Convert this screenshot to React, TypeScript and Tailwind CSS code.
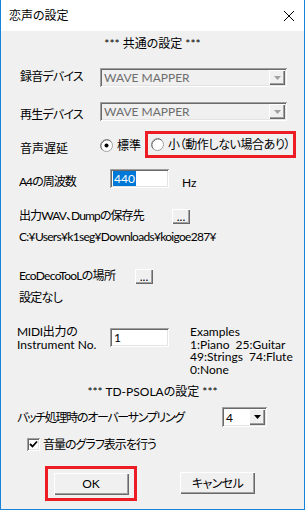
import React from "react";

const font = "font-['Lato','Noto_Sans_CJK_JP',sans-serif] [font-feature-settings:'palt']";

const sunken =
  "shadow-[inset_1px_1px_0_#a0a0a0,inset_-1px_-1px_0_#ffffff,inset_2px_2px_0_#696969,inset_-2px_-2px_0_#e3e3e3]";
const raised =
  "shadow-[inset_1px_1px_0_#ffffff,inset_-1px_-1px_0_#696969,inset_-2px_-2px_0_#a0a0a0]";

function Tri({ color }: { color: string }) {
  return (
    <svg width="7" height="4" viewBox="0 0 7 4">
      <polygon points="0,0 7,0 3.5,4" fill={color} />
    </svg>
  );
}

function Combo({ text }: { text: string }) {
  return (
    <div className={`w-[187px] h-[19px] bg-[#f0f0f0] ${sunken} flex items-center`}>
      <span className="pl-[4px] flex-1 text-[12px] leading-[15px] text-[#6d6d6d]">{text}</span>
      <div className={`w-[16px] h-[15px] mr-[2px] bg-[#f0f0f0] ${raised} flex items-center justify-center`}>
        <Tri color="#a0a0a0" />
      </div>
    </div>
  );
}

function Radio({ checked }: { checked: boolean }) {
  return (
    <svg width="13" height="13" viewBox="0 0 13 13" className="shrink-0">
      <circle cx="6.5" cy="6.5" r="6" fill="#ffffff" stroke="#a0a0a0" strokeWidth="1" />
      <path d="M2.3 10.7 A6 6 0 0 1 10.7 2.3" fill="none" stroke="#696969" strokeWidth="1" />
      {checked && <circle cx="6.5" cy="6.5" r="2" fill="#000000" />}
    </svg>
  );
}

function DotsBtn() {
  return (
    <div className={`w-[18px] h-[15px] bg-[#f0f0f0] ${raised} flex items-end justify-center pb-[3px]`}>
      <span className="text-[12px] leading-[8px] text-black">...</span>
    </div>
  );
}

export default function App() {
  return (
    <div className={`w-[305px] h-[510px] flex flex-col bg-[#f0f0f0] border-x border-b border-[#1883d7] text-black whitespace-nowrap ${font} text-[12px] leading-[15px]`}>
      {/* title bar */}
      <div className="h-[31px] bg-white flex items-center shrink-0">
        <span className="ml-[8px] flex-1 text-[12px] text-black">恋声の設定</span>
        <svg width="10" height="10" viewBox="0 0 10 10" className="mr-[10px]">
          <path d="M0 0 L10 10 M10 0 L0 10" stroke="#000" strokeWidth="1" />
        </svg>
      </div>

      <div className="mt-[5px] h-[15px] text-center">*** 共通の設定 ***</div>

      {/* 録音デバイス */}
      <div className="mt-[17px] h-[19px] flex">
        <span className="ml-[19px] w-[80px] mt-[1px] tracking-[-0.8px]">録音デバイス</span>
        <Combo text="WAVE MAPPER" />
      </div>

      {/* 再生デバイス */}
      <div className="mt-[15px] h-[19px] flex">
        <span className="ml-[19px] w-[80px] mt-[5px] tracking-[-0.8px]">再生デバイス</span>
        <Combo text="WAVE MAPPER" />
      </div>

      {/* 音声遅延 */}
      <div className="mt-[10px] h-[27px] flex">
        <span className="ml-[19px] w-[80px] mt-[10px]">音声遅延</span>
        <div className="flex items-start mt-[8px] w-[45px]">
          <Radio checked />
          <span className="ml-[4px] -mt-[1px]">標準</span>
        </div>
        <div className="w-[151px] h-[27px] border-[3px] border-[#ed1c24] flex items-center">
          <div className="ml-[3px]">
            <Radio checked={false} />
          </div>
          <span className="ml-[4px] tracking-[-0.4px]">小（動作しない場合あり）</span>
        </div>
      </div>

      {/* A4 */}
      <div className="mt-[11px] h-[19px] flex">
        <span className="ml-[18px] w-[91px] mt-[5px] tracking-[-1px]">A4の周波数</span>
        <div className={`w-[59px] h-[19px] bg-white ${sunken} flex items-center pl-[3px]`}>
          <span className="bg-[#0078d7] text-white h-[15px] px-[1px] leading-[15px]">440</span>
        </div>
        <span className="ml-[13px] mt-[6px]">Hz</span>
      </div>

      {/* 出力 */}
      <div className="mt-[20px] h-[16px] flex">
        <span className="ml-[18px] w-[153px] tracking-[-0.9px]">出力WAV、Dumpの保存先</span>
        <div className="mt-[1px]">
          <DotsBtn />
        </div>
      </div>
      <div className="mt-[5px] h-[15px] pl-[18px] tracking-[-0.7px]">C:¥Users¥k1seg¥Downloads¥koigoe287¥</div>

      {/* EcoDeco */}
      <div className="mt-[24px] h-[16px] flex">
        <span className="ml-[18px] w-[116px] tracking-[-0.7px]">EcoDecoTooLの場所</span>
        <div className="mt-[1px]">
          <DotsBtn />
        </div>
      </div>
      <div className="mt-[6px] h-[15px] pl-[18px] tracking-[-0.7px]">設定なし</div>

      {/* MIDI */}
      <div className="mt-[21px] flex">
        <div className="ml-[16px] w-[93px]">
          <div className="h-[12.5px] leading-[12.5px] tracking-[-0.3px]">MIDI出力の</div>
          <div className="h-[12.5px] leading-[12.5px]">Instrument No.</div>
        </div>
        <div className={`mt-[2px] w-[59px] h-[19px] bg-white ${sunken} flex items-center pl-[4px]`}>
          <span>1</span>
        </div>
        <div className="ml-[21px]">
          <div className="h-[12.5px] leading-[12.5px]">Examples</div>
          <div className="h-[12.5px] leading-[12.5px]">1:Piano&nbsp;&nbsp;25:Guitar</div>
          <div className="h-[12.5px] leading-[12.5px]">49:Strings&nbsp;&nbsp;74:Flute</div>
          <div className="h-[12.5px] leading-[12.5px]">0:None</div>
        </div>
      </div>

      <div className="mt-[8px] h-[15px] text-center">*** TD-PSOLAの設定 ***</div>

      {/* batch */}
      <div className="mt-[8px] h-[20px] flex">
        <span className="ml-[16px] w-[205px] mt-[3px] tracking-[-1.3px]">バッチ処理時のオーバーサンプリング</span>
        <div className={`w-[45px] h-[20px] bg-white ${sunken} flex items-center`}>
          <span className="pl-[4px] flex-1">4</span>
          <div className={`w-[16px] h-[16px] mr-[2px] bg-[#f0f0f0] ${raised} flex items-center justify-center`}>
            <Tri color="#000000" />
          </div>
        </div>
      </div>

      {/* checkbox */}
      <div className="mt-[10px] h-[15px] flex items-center">
        <div className={`ml-[26px] w-[13px] h-[13px] bg-white ${sunken} flex items-center justify-center`}>
          <svg width="9" height="9" viewBox="0 0 9 9">
            <path d="M1 4 L3.5 6.5 L8 1.5" fill="none" stroke="#000" strokeWidth="1.8" />
          </svg>
        </div>
        <span className="ml-[3px] tracking-[-1px]">音量のグラフ表示を行う</span>
      </div>

      {/* buttons */}
      <div className="mt-[14px] flex">
        <div className="ml-[44px] w-[92px] h-[35px] border-[3px] border-[#ed1c24] flex items-center justify-center">
          <div className={`w-[75px] h-[22px] bg-[#f0f0f0] ${raised} flex items-center justify-center`}>
            OK
          </div>
        </div>
        <div className={`ml-[43px] mt-[6px] w-[75px] h-[22px] bg-[#f0f0f0] ${raised} flex items-center justify-center tracking-[-0.6px]`}>
          キャンセル
        </div>
      </div>
    </div>
  );
}
